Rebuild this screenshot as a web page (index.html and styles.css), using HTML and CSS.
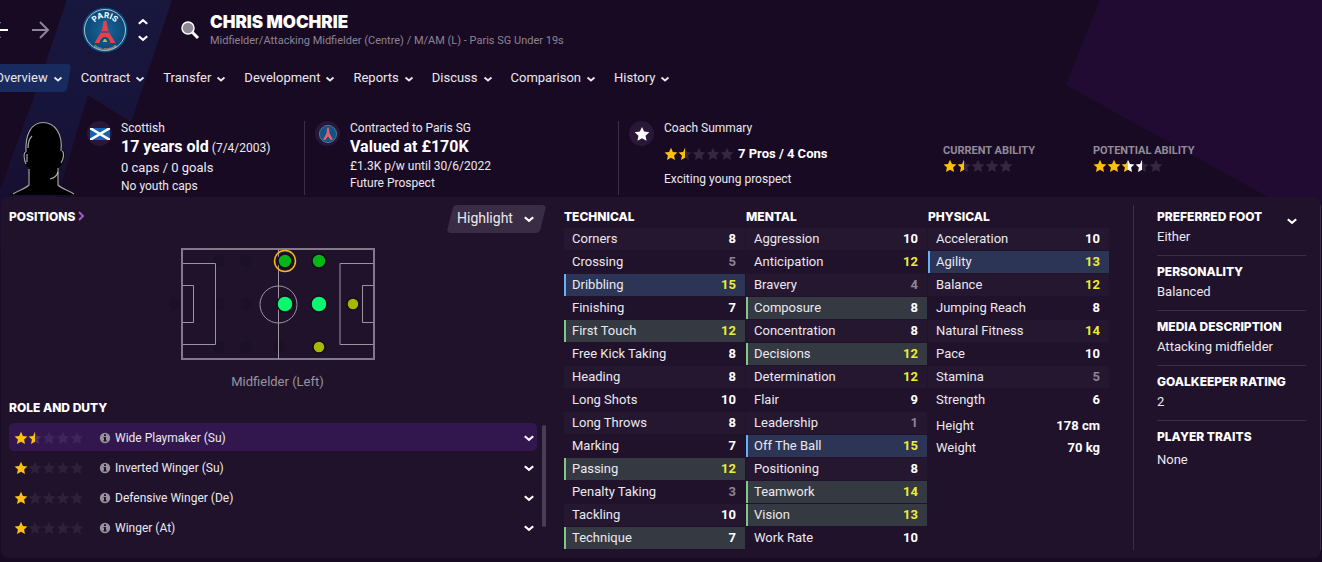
FILE: index.html
```html
<!DOCTYPE html>
<html lang="en">
<head>
<title>Chris Mochrie - Overview</title>
<meta charset="UTF-8">
<meta name="viewport" content="width=device-width, initial-scale=1">
<link rel="stylesheet" href="styles.css">
</head>
<body>

<!-- Shared icons -->
<svg class="defs" aria-hidden="true">
  <defs>
    <linearGradient id="gold-half"><stop offset=".5" stop-color="#fcc013"/><stop offset=".5" stop-color="#fff" stop-opacity=".12"/></linearGradient>
    <linearGradient id="gold-white"><stop offset=".5" stop-color="#fcc013"/><stop offset=".5" stop-color="#fff"/></linearGradient>
    <linearGradient id="white-half"><stop offset=".5" stop-color="#fff"/><stop offset=".5" stop-color="#fff" stop-opacity=".12"/></linearGradient>
    <linearGradient id="band" x2="0" y2="1"><stop offset="0" stop-color="#18173e"/><stop offset=".35" stop-color="#17143b"/><stop offset="1" stop-color="#190a24"/></linearGradient>
    <radialGradient id="crest-blue"><stop offset="0" stop-color="#17679a"/><stop offset="1" stop-color="#0b4776"/></radialGradient>
    <path id="arc-top" d="M9.500 24.500a13.500 13.500 0 0 1 27 0"/>
    <path id="arc-bottom" d="M4.500 25a18.500 18.500 0 0 0 37 0"/>
  </defs>
  <symbol id="star" viewBox="0 0 14 14"><path d="M7 .8l1.900 4.100 4.500.5-3.300 3.100.9 4.500L7 10.800 3 13l.9-4.500L.6 5.400l4.500-.5z"/></symbol>
  <symbol id="chevron" viewBox="0 0 10 10"><path d="M1.500 3.500l3.500 3 3.500-3" fill="none" stroke="currentColor" stroke-width="1.800"/></symbol>
  <symbol id="info" viewBox="0 0 12 12"><circle cx="6" cy="6" r="5.200" fill="#97909d"/><path d="M5 2.200h2v1.800H5zM4.500 5H7v3.500h.8V9.600H4.300V8.500H5V6h-.5z" fill="#21132c"/></symbol>
  <symbol id="tower" viewBox="0 0 46 46">
    <path d="M21.500 14h3l1 7 2 5 6 10h-5c-1-4-3-5-5.500-5s-4.500 1-5.500 5h-5l6-10 2-5z" fill="#e5404f"/>
    <path d="M19 25h8" stroke="#0b4776"/>
    <path d="M18 35c1-4 3-5 5-5s4 1 5 5z" fill="#124b75"/>
    <path d="M20.500 35c1-1 1-3 2.500-3s1.500 2 2.500 3z" fill="#c9ad55"/>
  </symbol>
</svg>

<!-- Backdrop -->
<svg class="backdrop-left" viewBox="0 0 200 562" width="200" height="562" aria-hidden="true">
  <path d="M67 0H172L131 122 88 95 26 300H0V190L33 100z" fill="url(#band)"/>
</svg>
<svg class="backdrop-right" viewBox="0 0 260 202" width="260" height="202" aria-hidden="true">
  <path d="M38 0H260V202H215L4 85z" fill="#210b33"/>
</svg>

<!-- Title bar -->
<header class="title-bar">
  <div class="history">
    <button aria-label="Back"><svg width="20" height="20" viewBox="0 0 20 20"><path d="M18 10H2M10 2l-8 8 8 8" fill="none" stroke="#fff" stroke-width="2"/></svg></button>
    <button aria-label="Forward"><svg width="20" height="20" viewBox="0 0 20 20"><path d="M1 10h16M9 2l8 8-8 8" fill="none" stroke="#8b8596" stroke-width="2"/></svg></button>
  </div>
  <svg class="crest" viewBox="0 0 46 46" width="46" height="46" role="img" aria-label="Paris SG">
    <circle cx="23" cy="23" r="22.500" fill="#0d4d7e"/>
    <circle cx="23" cy="23" r="20.500" fill="url(#crest-blue)" stroke="#a8c4d4" stroke-width="1"/>
    <text class="crest-name"><textPath href="#arc-top" startOffset="50%">PARIS</textPath></text>
    <text class="crest-town"><textPath href="#arc-bottom" startOffset="50%">SAINT-GERMAIN</textPath></text>
    <use href="#tower"/>
  </svg>
  <div class="stepper">
    <button aria-label="Previous player"><svg class="up" width="12" height="12"><use href="#chevron"/></svg></button>
    <button aria-label="Next player"><svg width="12" height="12"><use href="#chevron"/></svg></button>
  </div>
  <button class="search" aria-label="Search"><svg width="20" height="20" viewBox="0 0 20 20"><path d="M11 11l7 7" stroke="#fff" stroke-width="3"/><circle cx="8" cy="8" r="6" fill="#8f8795" stroke="#fff" stroke-width="1.500"/></svg></button>
  <div class="player">
    <h1>CHRIS MOCHRIE</h1>
    <p>Midfielder/Attacking Midfielder (Centre) / M/AM (L) - Paris SG Under 19s</p>
  </div>
</header>

<!-- Tabs -->
<nav class="tabs">
  <a class="active" href="#overview">Overview<svg width="10" height="10"><use href="#chevron"/></svg></a>
  <a href="#contract">Contract<svg width="10" height="10"><use href="#chevron"/></svg></a>
  <a href="#transfer">Transfer<svg width="10" height="10"><use href="#chevron"/></svg></a>
  <a href="#development">Development<svg width="10" height="10"><use href="#chevron"/></svg></a>
  <a href="#reports">Reports<svg width="10" height="10"><use href="#chevron"/></svg></a>
  <a href="#discuss">Discuss<svg width="10" height="10"><use href="#chevron"/></svg></a>
  <a href="#comparison">Comparison<svg width="10" height="10"><use href="#chevron"/></svg></a>
  <a href="#history">History<svg width="10" height="10"><use href="#chevron"/></svg></a>
</nav>

<!-- Summary strip -->
<section class="summary">
  <svg class="face" viewBox="0 0 66 74" width="66" height="74" aria-hidden="true">
    <path d="M0 74c4-5 13-6 17-10l1-17c-3-2-5-4-5-8-1-4-2-8 1-9 0-16 4-29 18-29s20 13 19 28c4 1 3 6 2 9-1 4-2 7-5 8l-1 18c4 4 13 5 18 10z" fill="#000"/>
    <path d="M15 31C14 14 20 1.500 32 1.500S52 13 50 30M15 31c-3 0-2 8 0 12M51 30c3 2 1 9-1 12M18 48v16c-4 4-10 5-16 9M47 47v17c4 4 10 5 16 9" fill="none" stroke="#a3a0a8" stroke-width="1.200"/>
    <path d="M17 27c0-5 1-9 4-12M16 33v8M47 51c-1 4-4 6-8 7" fill="none" stroke="#e8e8e8" stroke-width="1.200" opacity=".7"/>
  </svg>
  <div class="card nation">
    <span class="badge"><svg width="20" height="12" viewBox="0 0 20 12" role="img" aria-label="Scotland"><path d="M0 0h20v12H0z" fill="#1763ae"/><path d="M0 0l20 12M20 0L0 12" stroke="#fff" stroke-width="2.500"/></svg></span>
    <div class="card-text">
      <p>Scottish</p>
      <p class="lead"><strong>17 years old</strong> (7/4/2003)</p>
      <p class="mid">0 caps / 0 goals</p>
      <p>No youth caps</p>
    </div>
  </div>
  <div class="card contract">
    <span class="badge"><svg width="18" height="18" viewBox="0 0 46 46" aria-hidden="true"><circle cx="23" cy="23" r="22" fill="#125386" stroke="#5e87a4" stroke-width="2"/><path d="M21 7h4l2 15 9 16h-7l-6-9-6 9h-7l9-16z" fill="#e5606c"/></svg></span>
    <div class="card-text">
      <p>Contracted to Paris SG</p>
      <p class="lead"><strong>Valued at £170K</strong></p>
      <p class="wage">£1.3K p/w until 30/6/2022</p>
      <p>Future Prospect</p>
    </div>
  </div>
  <div class="card coach">
    <span class="badge"><svg width="16" height="16" fill="#fff"><use href="#star"/></svg></span>
    <div class="card-text">
      <p>Coach Summary</p>
      <p class="pros"><span class="stars"><svg class="on"><use href="#star"/></svg><svg class="half"><use href="#star"/></svg><svg><use href="#star"/></svg><svg><use href="#star"/></svg><svg><use href="#star"/></svg></span><strong>7 Pros / 4 Cons</strong></p>
      <p>Exciting young prospect</p>
    </div>
    <div class="ability">
      <h2>CURRENT ABILITY</h2>
      <span class="stars"><svg class="on"><use href="#star"/></svg><svg class="half"><use href="#star"/></svg><svg><use href="#star"/></svg><svg><use href="#star"/></svg><svg><use href="#star"/></svg></span>
    </div>
    <div class="ability">
      <h2>POTENTIAL ABILITY</h2>
      <span class="stars"><svg class="on"><use href="#star"/></svg><svg class="on"><use href="#star"/></svg><svg class="on-white"><use href="#star"/></svg><svg class="half-white"><use href="#star"/></svg><svg><use href="#star"/></svg></span>
    </div>
  </div>
</section>

<main class="panel">
  <!-- Positions and roles -->
  <section class="positions">
    <div class="positions-head">
      <h2><a href="#positions">POSITIONS<svg width="8" height="10" viewBox="0 0 8 10"><path d="M2 1l4 4-4 4" fill="none" stroke="#9a5fc4" stroke-width="2"/></svg></a></h2>
      <div class="highlight">
        <select aria-label="Highlight"><option>Highlight</option></select>
        <svg width="12" height="12"><use href="#chevron"/></svg>
      </div>
    </div>
    <figure class="pitch">
      <svg viewBox="0 0 206 112" width="206" height="112" role="img" aria-label="Playing positions">
        <g fill="#1c1028"><circle cx="6" cy="56" r="6"/><circle cx="50" cy="13" r="6"/><circle cx="77" cy="13" r="6"/><circle cx="50" cy="56" r="6"/><circle cx="77" cy="56" r="6"/><circle cx="50" cy="99" r="6"/><circle cx="77" cy="99" r="6"/><circle cx="110" cy="99" r="6"/></g>
        <g fill="none" stroke="#9b94a1">
          <path d="M13 1H205V111H13z" stroke="#827a8a" stroke-width="2"/>
          <path d="M109.500 1v110M14 15.500h32.500v81H14M14 37.500h10.500v37H14M204 15.500h-33v81h33M204 37.500h-10.500v37H204"/>
          <circle cx="109.500" cy="56.500" r="18.500"/>
        </g>
        <g stroke="#150b1d" stroke-width="1.500">
          <circle cx="116" cy="13" r="7" fill="#07b518"/>
          <circle cx="150" cy="13" r="7" fill="#07b518"/>
          <circle cx="116" cy="56" r="8" fill="#09f86d"/>
          <circle cx="150" cy="56" r="8" fill="#09f86d"/>
          <circle cx="184" cy="56" r="6" fill="#a6b800"/>
          <circle cx="150" cy="99" r="6" fill="#a6b800"/>
        </g>
        <circle cx="116" cy="13" r="10.500" fill="none" stroke="#fcb913" stroke-width="1.500"/>
      </svg>
      <figcaption>Midfielder (Left)</figcaption>
    </figure>
    <h2>ROLE AND DUTY</h2>
    <div class="roles">
      <ul>
        <li class="selected"><span class="stars"><svg class="on"><use href="#star"/></svg><svg class="half"><use href="#star"/></svg><svg><use href="#star"/></svg><svg><use href="#star"/></svg><svg><use href="#star"/></svg></span><svg class="info"><use href="#info"/></svg>Wide Playmaker (Su)<button aria-label="Show Wide Playmaker"><svg width="12" height="12"><use href="#chevron"/></svg></button></li>
        <li><span class="stars"><svg class="on"><use href="#star"/></svg><svg><use href="#star"/></svg><svg><use href="#star"/></svg><svg><use href="#star"/></svg><svg><use href="#star"/></svg></span><svg class="info"><use href="#info"/></svg>Inverted Winger (Su)<button aria-label="Show Inverted Winger"><svg width="12" height="12"><use href="#chevron"/></svg></button></li>
        <li><span class="stars"><svg class="on"><use href="#star"/></svg><svg><use href="#star"/></svg><svg><use href="#star"/></svg><svg><use href="#star"/></svg><svg><use href="#star"/></svg></span><svg class="info"><use href="#info"/></svg>Defensive Winger (De)<button aria-label="Show Defensive Winger"><svg width="12" height="12"><use href="#chevron"/></svg></button></li>
        <li><span class="stars"><svg class="on"><use href="#star"/></svg><svg><use href="#star"/></svg><svg><use href="#star"/></svg><svg><use href="#star"/></svg><svg><use href="#star"/></svg></span><svg class="info"><use href="#info"/></svg>Winger (At)<button aria-label="Show Winger"><svg width="12" height="12"><use href="#chevron"/></svg></button></li>
      </ul>
      <div class="scrollbar"></div>
    </div>
  </section>

  <!-- Attributes -->
  <section class="attributes">
    <table>
      <caption>TECHNICAL</caption>
      <tr><th scope="row">Corners</th><td>8</td></tr>
      <tr><th scope="row">Crossing</th><td class="low">5</td></tr>
      <tr class="key"><th scope="row">Dribbling</th><td class="good">15</td></tr>
      <tr><th scope="row">Finishing</th><td>7</td></tr>
      <tr class="useful"><th scope="row">First Touch</th><td class="good">12</td></tr>
      <tr><th scope="row">Free Kick Taking</th><td>8</td></tr>
      <tr><th scope="row">Heading</th><td>8</td></tr>
      <tr><th scope="row">Long Shots</th><td>10</td></tr>
      <tr><th scope="row">Long Throws</th><td>8</td></tr>
      <tr><th scope="row">Marking</th><td>7</td></tr>
      <tr class="useful"><th scope="row">Passing</th><td class="good">12</td></tr>
      <tr><th scope="row">Penalty Taking</th><td class="low">3</td></tr>
      <tr><th scope="row">Tackling</th><td>10</td></tr>
      <tr class="useful"><th scope="row">Technique</th><td>7</td></tr>
    </table>
    <table>
      <caption>MENTAL</caption>
      <tr><th scope="row">Aggression</th><td>10</td></tr>
      <tr><th scope="row">Anticipation</th><td class="good">12</td></tr>
      <tr><th scope="row">Bravery</th><td class="low">4</td></tr>
      <tr class="useful"><th scope="row">Composure</th><td>8</td></tr>
      <tr><th scope="row">Concentration</th><td>8</td></tr>
      <tr class="useful"><th scope="row">Decisions</th><td class="good">12</td></tr>
      <tr><th scope="row">Determination</th><td class="good">12</td></tr>
      <tr><th scope="row">Flair</th><td>9</td></tr>
      <tr><th scope="row">Leadership</th><td class="low">1</td></tr>
      <tr class="key"><th scope="row">Off The Ball</th><td class="good">15</td></tr>
      <tr><th scope="row">Positioning</th><td>8</td></tr>
      <tr class="useful"><th scope="row">Teamwork</th><td class="good">14</td></tr>
      <tr class="useful"><th scope="row">Vision</th><td class="good">13</td></tr>
      <tr><th scope="row">Work Rate</th><td>10</td></tr>
    </table>
    <div>
      <table>
        <caption>PHYSICAL</caption>
        <tr><th scope="row">Acceleration</th><td>10</td></tr>
        <tr class="key"><th scope="row">Agility</th><td class="good">13</td></tr>
        <tr><th scope="row">Balance</th><td class="good">12</td></tr>
        <tr><th scope="row">Jumping Reach</th><td>8</td></tr>
        <tr><th scope="row">Natural Fitness</th><td class="good">14</td></tr>
        <tr><th scope="row">Pace</th><td>10</td></tr>
        <tr><th scope="row">Stamina</th><td class="low">5</td></tr>
        <tr><th scope="row">Strength</th><td>6</td></tr>
      </table>
      <table class="body-size">
        <tr><th scope="row">Height</th><td>178 cm</td></tr>
        <tr><th scope="row">Weight</th><td>70 kg</td></tr>
      </table>
    </div>
  </section>

  <!-- Personal details -->
  <aside class="details">
    <button aria-label="More details"><svg width="12" height="12"><use href="#chevron"/></svg></button>
    <dl>
      <div><dt>PREFERRED FOOT</dt><dd>Either</dd></div>
      <div><dt>PERSONALITY</dt><dd>Balanced</dd></div>
      <div><dt>MEDIA DESCRIPTION</dt><dd>Attacking midfielder</dd></div>
      <div><dt>GOALKEEPER RATING</dt><dd>2</dd></div>
      <div class="traits"><dt>PLAYER TRAITS</dt><dd>None</dd></div>
    </dl>
  </aside>
</main>
</body>
</html>
```
FILE: styles.css
```css
* {
  box-sizing: border-box;
}

body {
  margin: 0;
  min-height: 100vh;
  position: relative;
  overflow-x: hidden;
  background: #190a24;
  color: #ebe8ee;
  font-family: Roboto, "Liberation Sans", Arial, sans-serif;
  font-size: 13px;
  line-height: 20px;
}

h1, h2, p, ul, dl, dd, figure {
  margin: 0;
  padding: 0;
}

button {
  display: flex;
  padding: 0;
  border: 0;
  background: none;
  color: #fff;
}

a {
  color: inherit;
  text-decoration: none;
}

.defs {
  position: absolute;
  width: 0;
  height: 0;
}

.backdrop-left, .backdrop-right {
  position: absolute;
  top: 0;
  z-index: -1;
}
.backdrop-left {
  left: 0;
}
.backdrop-right {
  right: 0;
}

/* Title bar */
.title-bar {
  display: flex;
  align-items: center;
  height: 60px;
}
.history {
  display: flex;
  gap: 21px;
  margin-left: -10px;
}
.crest {
  margin-left: 31px;
}
.crest-name, .crest-town {
  font-family: Inter, sans-serif;
  font-weight: 700;
  text-anchor: middle;
  fill: #fff;
}
.crest-name {
  font-size: 8px;
}
.crest-town {
  font-size: 3px;
  fill: #c9ad75;
}
.stepper {
  display: grid;
  gap: 4px;
  margin-left: 9px;
}
.up {
  transform: rotate(180deg);
}
.search {
  margin-left: 31px;
}
.player {
  margin-left: 10px;
}
.player h1 {
  font: 900 17px/22px Inter, sans-serif;
  color: #fff;
}
.player p {
  font-size: 11px;
  line-height: 16px;
  color: #8c8493;
}

/* Tabs */
.tabs {
  display: flex;
  gap: 18px;
  margin: 4px 0 0 -5px;
}
.tabs a {
  display: flex;
  align-items: center;
  gap: 5px;
  height: 28px;
  padding-bottom: 1px;
}
.tabs svg {
  margin-top: 2px;
}
.tabs .active {
  position: relative;
}
.tabs .active::before {
  content: "";
  position: absolute;
  inset: 0 -6px 0 -10px;
  z-index: -1;
  border-radius: 4px;
  background: #182a5e;
  transform: skewX(-10deg);
}

/* Stars */
.stars {
  display: flex;
}
.stars svg {
  width: 14px;
  height: 14px;
  fill: #ffffff1f;
}
.stars .on {
  fill: #fcc013;
}
.stars .half {
  fill: url(#gold-half);
}
.stars .on-white {
  fill: url(#gold-white);
}
.stars .half-white {
  fill: url(#white-half);
}

/* Summary strip */
.summary {
  display: flex;
  height: 74px;
  margin: 29px 0 2px 11px;
}
.card {
  display: flex;
  gap: 9px;
  padding-left: 10px;
  font-size: 12px;
  line-height: 18px;
}
.card-text {
  margin-top: -2px;
}
.card p {
  height: 18px;
}
.card + .card {
  border-left: 1px solid #3b2e45;
}
.nation {
  flex: 0 0 227px;
}
.contract {
  flex: 0 0 314px;
}
.coach {
  flex: 1;
}
.contract, .coach {
  gap: 10px;
}
.badge {
  display: flex;
  align-items: center;
  justify-content: center;
  width: 25px;
  height: 25px;
  border-radius: 50%;
  background: #2a1638;
}
.card strong {
  color: #fff;
}
.card .lead {
  height: 20px;
  line-height: 20px;
}
.lead strong {
  font-size: 16px;
}
.card .mid {
  height: 20px;
  font-size: 13px;
  line-height: 22px;
}
.card .wage {
  height: 17px;
}
.card .pros {
  display: flex;
  align-items: center;
  gap: 4px;
  height: 33px;
  font-size: 13px;
}
.ability {
  padding-top: 22px;
}
.ability h2 {
  font-size: 11px;
  line-height: 16px;
  color: #938b99;
}
.coach .ability {
  width: 96px;
  margin-left: 44px;
  white-space: nowrap;
}
.coach .ability + .ability {
  padding-left: 0;
}
.coach .card-text {
  width: 225px;
}

/* Main panel */
.panel {
  display: grid;
  grid-template-columns: 1fr 546px 211px;
  margin: 0 1px 4px;
  padding: 8px 0;
  border-radius: 8px;
  background: #21132cf0;
}
.panel h2, caption, dt {
  font: 800 12px/20px Inter, sans-serif;
  color: #fff;
}

/* Positions and roles */
.positions {
  padding: 0 18px 0 8px;
}
.positions-head {
  display: flex;
  justify-content: space-between;
}
.positions h2 {
  padding-top: 2px;
}
.positions h2 svg {
  margin-left: 2px;
}
.highlight {
  position: relative;
  z-index: 0;
  display: flex;
  align-items: center;
  width: 99px;
  height: 28px;
}
.highlight::before {
  content: "";
  position: absolute;
  inset: 0 3px;
  z-index: -1;
  border-radius: 4px;
  background: #3b2c46;
  transform: skewX(-14deg);
}
.highlight select {
  width: 100%;
  height: 28px;
  padding: 0 0 3px 10px;
  border: 0;
  appearance: none;
  background: none;
  color: #ebe8ee;
  font: 14px Roboto, "Liberation Sans", sans-serif;
}
.highlight svg {
  position: absolute;
  right: 11px;
  color: #fff;
  pointer-events: none;
}
.pitch {
  display: grid;
  justify-items: center;
  gap: 12px;
  margin-top: 15px;
}
.pitch svg {
  margin-right: 12px;
}
.pitch figcaption {
  color: #9a92a1;
}
.pitch + h2 {
  padding-top: 6px;
}
.roles {
  display: flex;
  gap: 5px;
  margin-top: 5px;
}
.roles ul {
  flex: 1;
  list-style: none;
  font-size: 12px;
}
.roles li {
  display: flex;
  align-items: center;
  height: 28px;
  margin-bottom: 2px;
  padding: 1px 2px 0 5px;
  border-radius: 5px;
}
.roles .selected {
  background: #32174f;
}
.roles .stars svg {
  fill: #ffffff10;
}
.roles .stars .on {
  fill: #fcc013;
}
.roles .stars .half {
  fill: url(#gold-half);
}
.roles .info {
  width: 12px;
  height: 12px;
  margin: 0 4px 0 15px;
}
.roles button {
  margin-left: auto;
}
.scrollbar {
  width: 4px;
  height: 102px;
  margin-top: 2px;
  border-radius: 2px;
  background: #493c54;
}

/* Attributes */
.attributes {
  display: grid;
  grid-template-columns: repeat(3, 1fr);
}
table {
  width: calc(100% - 1px);
  height: fit-content;
  border-spacing: 0 1px;
}
caption {
  padding: 2px 0 0;
  text-align: left;
}
tr:nth-child(odd) {
  background: #251730;
}
tr.key {
  background: #2d3556;
}
tr.useful {
  background: #353a42;
}
th, td {
  height: 22px;
  padding: 0 9px 1px 6px;
  line-height: 20px;
}
th {
  border-left: 2px solid transparent;
  text-align: left;
  font-weight: 400;
}
.key th {
  border-color: #63b1fb;
}
.useful th {
  border-color: #7fc887;
}
td {
  text-align: right;
  font-weight: 700;
  color: #fff;
}
.good {
  color: #ecec35;
}
.low {
  color: #8d8592;
}
.body-size {
  margin-top: 3px;
  border-spacing: 0;
}
.body-size tr {
  background: none;
}

/* Personal details */
.details {
  position: relative;
  margin-left: 23px;
  padding: 2px 14px 0 23px;
  border-left: 1px solid #3b2e45;
  border-right: 1px solid #3b2e45;
}
.details button {
  position: absolute;
  top: 10px;
  right: 22px;
}
.details dl > div {
  height: 49px;
  margin-bottom: 6px;
  border-bottom: 1px solid #3b2e45;
}
.details dl > .traits {
  border: 0;
}
.traits dd {
  padding-top: 3px;
}
```
